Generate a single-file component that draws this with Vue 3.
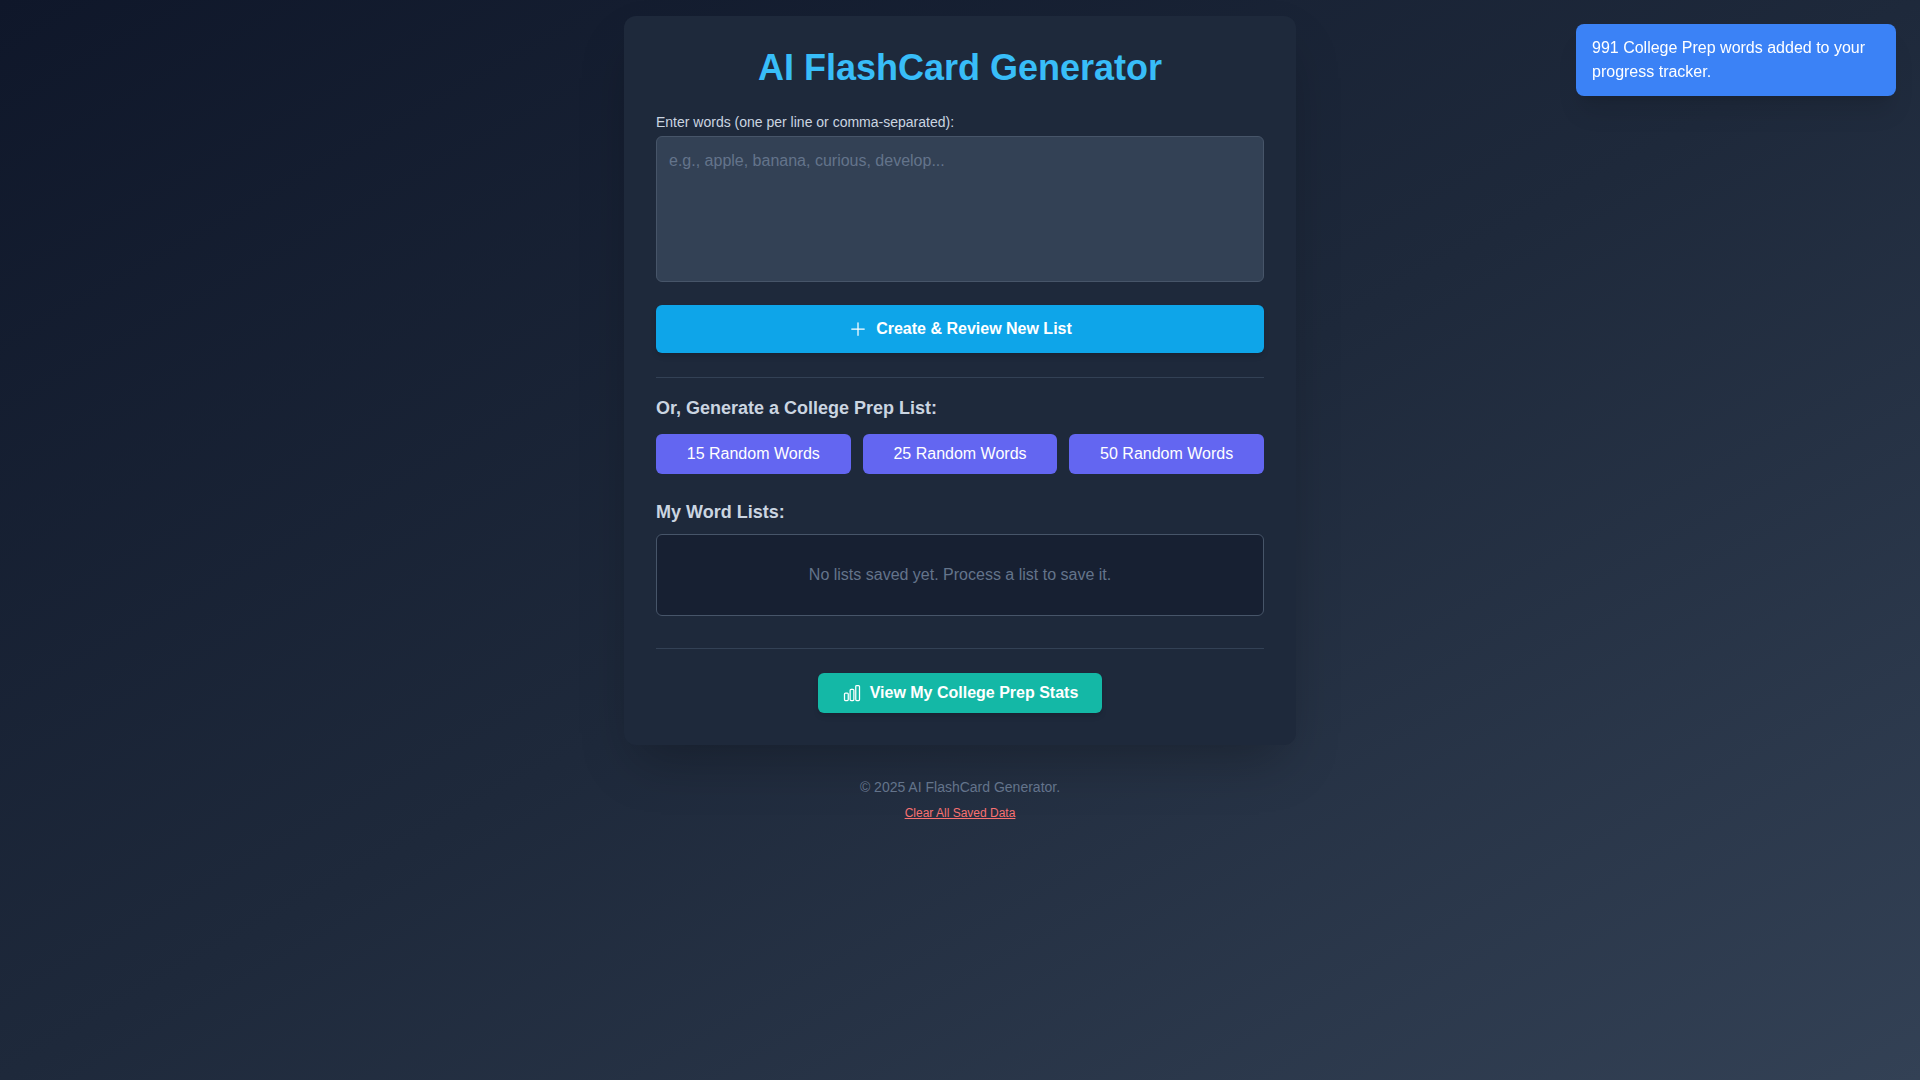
<script setup>
import { ref } from 'vue'

const words = ref('')
const listSizes = [15, 25, 50]
const trackedCount = 991
</script>

<template>
  <div class="page">
    <main class="card">
      <h1 class="title">AI FlashCard Generator</h1>

      <form class="entry" @submit.prevent>
        <label class="label" for="words">Enter words (one per line or comma-separated):</label>
        <div class="field">
          <textarea
            id="words"
            v-model="words"
            class="words"
            rows="5"
            placeholder="e.g., apple, banana, curious, develop..."
          ></textarea>
        </div>
        <button class="btn btn-create" type="submit">
          <svg class="icon" viewBox="0 0 24 24" fill="none" stroke="currentColor" stroke-width="1.5" stroke-linecap="round" stroke-linejoin="round" aria-hidden="true">
            <path d="M12 4.5v15m7.5-7.5h-15" />
          </svg>
          Create &amp; Review New List
        </button>
      </form>

      <section class="generate">
        <h2 class="heading">Or, Generate a College Prep List:</h2>
        <div class="sizes">
          <button v-for="size in listSizes" :key="size" class="btn btn-size" type="button">
            {{ size }} Random Words
          </button>
        </div>
      </section>

      <section class="saved">
        <h2 class="heading">My Word Lists:</h2>
        <div class="lists">
          <p class="empty">No lists saved yet. Process a list to save it.</p>
        </div>
      </section>

      <div class="stats">
        <button class="btn btn-stats" type="button">
          <svg class="icon" viewBox="0 0 24 24" fill="none" stroke="currentColor" stroke-width="1.5" stroke-linecap="round" stroke-linejoin="round" aria-hidden="true">
            <path d="M3 13.125C3 12.504 3.504 12 4.125 12h2.25c.621 0 1.125.504 1.125 1.125v6.75C7.5 20.496 6.996 21 6.375 21h-2.25A1.125 1.125 0 0 1 3 19.875v-6.75ZM9.75 8.625c0-.621.504-1.125 1.125-1.125h2.25c.621 0 1.125.504 1.125 1.125v11.25c0 .621-.504 1.125-1.125 1.125h-2.25a1.125 1.125 0 0 1-1.125-1.125V8.625ZM16.5 4.125c0-.621.504-1.125 1.125-1.125h2.25C20.496 3 21 3.504 21 4.125v15.75c0 .621-.504 1.125-1.125 1.125h-2.25a1.125 1.125 0 0 1-1.125-1.125V4.125Z" />
          </svg>
          View My College Prep Stats
        </button>
      </div>
    </main>

    <footer class="footer">
      <p class="copyright">© 2025 AI FlashCard Generator.</p>
      <button class="clear" type="button">Clear All Saved Data</button>
    </footer>

    <div class="toast" role="status">
      {{ trackedCount }} College Prep words added to your progress tracker.
    </div>
  </div>
</template>

<style>
body {
  margin: 0;
}
</style>

<style scoped>
.page,
.page * {
  box-sizing: border-box;
}

.page {
  display: flex;
  flex-direction: column;
  align-items: center;
  min-height: 100vh;
  padding: 16px;
  background: linear-gradient(to bottom right, #0f172a, #1e293b, #334155);
  color: #f1f5f9;
  font-family: "Liberation Sans", Arial, sans-serif;
  font-size: 16px;
  line-height: 24px;
}

h1,
h2,
p {
  margin: 0;
}

button,
textarea {
  font: inherit;
}

.card {
  width: 100%;
  max-width: 672px;
  padding: 32px;
  border-radius: 12px;
  background: #1e293b;
  box-shadow: 0 25px 50px -12px rgba(0, 0, 0, 0.25);
}

.title {
  margin-bottom: 24px;
  color: #38bdf8;
  font-size: 36px;
  line-height: 40px;
  text-align: center;
}

.label {
  display: block;
  margin-bottom: 4px;
  color: #cbd5e1;
  font-size: 14px;
  line-height: 20px;
}

.field {
  margin-bottom: 16px;
}

.words {
  width: 100%;
  padding: 12px;
  border: 1px solid #475569;
  border-radius: 6px;
  background: #334155;
  color: #f1f5f9;
  resize: none;
}

.words::placeholder {
  color: #64748b;
}

.btn {
  display: flex;
  align-items: center;
  justify-content: center;
  gap: 8px;
  padding: 8px 16px;
  border: 0;
  border-radius: 6px;
  color: #fff;
  cursor: pointer;
}

.btn-create {
  width: 100%;
  padding: 12px 16px;
  background: #0ea5e9;
  font-weight: 600;
  box-shadow: 0 4px 6px -1px rgba(0, 0, 0, 0.1), 0 2px 4px -2px rgba(0, 0, 0, 0.1);
}

.icon {
  width: 20px;
  height: 20px;
}

.generate {
  margin-top: 24px;
  padding-top: 16px;
  border-top: 1px solid #334155;
}

.heading {
  color: #cbd5e1;
  font-size: 18px;
  font-weight: 600;
  line-height: 28px;
}

.sizes {
  display: grid;
  grid-template-columns: repeat(3, 1fr);
  gap: 12px;
  margin-top: 12px;
}

.btn-size {
  background: #6366f1;
}

.saved {
  margin-top: 24px;
}

.lists {
  margin-top: 8px;
  padding: 12px;
  border: 1px solid #475569;
  border-radius: 6px;
  background: rgba(15, 23, 42, 0.5);
}

.empty {
  padding: 16px 0;
  color: #64748b;
  text-align: center;
}

.stats {
  display: flex;
  justify-content: center;
  margin-top: 32px;
  padding-top: 24px;
  border-top: 1px solid #334155;
}

.btn-stats {
  padding: 8px 24px;
  background: #14b8a6;
  font-weight: 600;
  box-shadow: 0 4px 6px -1px rgba(0, 0, 0, 0.1), 0 2px 4px -2px rgba(0, 0, 0, 0.1);
}

.footer {
  display: flex;
  flex-direction: column;
  align-items: center;
  gap: 8px;
  margin-top: 32px;
}

.copyright {
  color: #64748b;
  font-size: 14px;
  line-height: 20px;
}

.clear {
  padding: 0;
  border: 0;
  background: none;
  color: #f87171;
  font-size: 12px;
  line-height: 16px;
  text-decoration: underline;
  cursor: pointer;
}

.toast {
  position: fixed;
  top: 24px;
  right: 24px;
  width: 320px;
  padding: 12px 16px;
  border-radius: 8px;
  background: #3b82f6;
  color: #fff;
  box-shadow: 0 20px 25px -5px rgba(0, 0, 0, 0.1), 0 8px 10px -6px rgba(0, 0, 0, 0.1);
}
</style>
